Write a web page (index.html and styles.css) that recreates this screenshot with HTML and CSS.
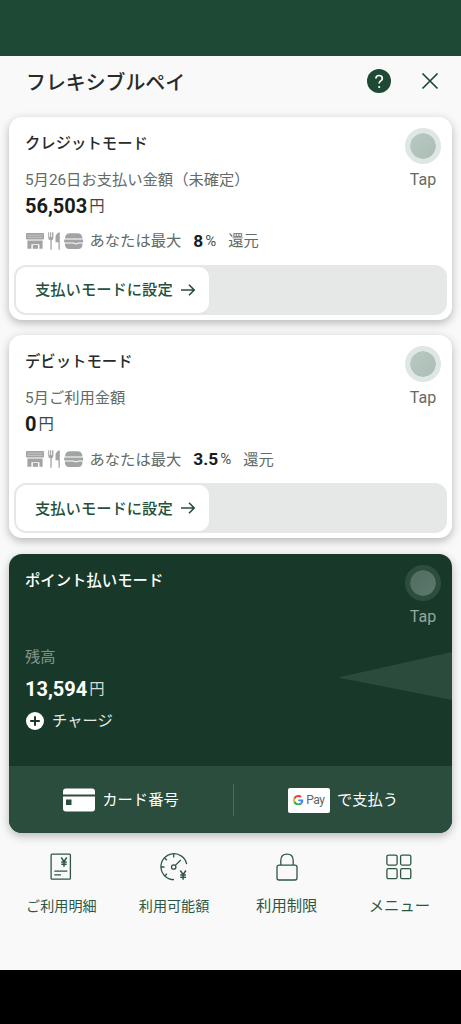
FILE: index.html
```html
<!DOCTYPE html>
<html lang="ja">
<head>
<meta charset="utf-8">
<title>フレキシブルペイ</title>
<link rel="stylesheet" href="styles.css">
</head>
<body>
<svg width="0" height="0" class="defs">
  <symbol id="perks" viewBox="0 0 58 18">
    <g fill="#a2a4a3">
      <rect x="0" y="1" width="18" height="6.600" rx=".8"/>
      <path d="M1.400 8.600h15.200v8.200h-3.200v-4.600H5.400v4.600H1.400z"/>
      <rect x="6.800" y="13" width="5.200" height="3.800"/>
      <path d="M22.200.3h1v5h.9v-5h1.100v5h.9v-5h1.300v5.700q0 1.900-1.700 2.300V17.700h-1.300V8.300q-2.200-.4-2.200-2.600z"/>
      <path d="M33.800.2v17.500h-1.300V10.300h-3V4.500q.8-3.500 4.300-4.300z"/>
      <path d="M38.900 6.600q.4-5.400 5.300-5.400h7q4.900 0 5.300 5.400z"/>
      <path d="M38.200 7.500h18.900v2.900h-4.600l-2.600 1.200-2.600-1.200h-9.100z"/>
      <path d="M38.900 11.400h8l3 1.200 3-1.200h3.600v1.200q-.4 4.500-4.300 4.500h-9q-3.900 0-4.300-4.500z"/>
    </g>
    <path d="M1.200 3.200h15.600M1.200 5.400h15.600" stroke="#d0d2d1" stroke-width=".7"/>
  </symbol>
  <symbol id="arrow" viewBox="0 0 16 14">
    <path d="M1 7h13M9 1.700 14.200 7 9 12.300" fill="none" stroke="#24503c" stroke-width="1.600"/>
  </symbol>
</svg>

<div class="status"></div>
<main class="screen">
  <header class="top">
    <h1>フレキシブルペイ</h1>
    <svg class="help" viewBox="0 0 24 24"><circle cx="12" cy="12" r="12" fill="#1e4935"/><path d="M8.900 9.600q0-3.100 3.200-3.100t3.200 2.900q0 1.400-1.600 2.500-1.500 1-1.500 2.600" fill="none" stroke="#fff" stroke-width="1.700"/><circle cx="12.200" cy="18" r="1.100" fill="#fff"/></svg>
    <svg class="close" viewBox="0 0 18 18"><path d="M1.500 1.500l15 15M16.500 1.500l-15 15" stroke="#1e4935" stroke-width="1.700"/></svg>
  </header>

  <section class="card">
    <div class="head">
      <div class="info">
        <h2>クレジットモード</h2>
        <p class="sub">5月26日お支払い金額（未確定）</p>
        <p class="amount"><b>56,503</b><span>円</span></p>
      </div>
      <div class="tap"><i class="knob"></i><span>Tap</span></div>
    </div>
    <p class="perk"><svg class="perks"><use href="#perks"/></svg><span>あなたは最大</span><b>8</b><small>%</small><span>還元</span></p>
    <div class="track"><div class="set">支払いモードに設定<svg class="arrow"><use href="#arrow"/></svg></div></div>
  </section>

  <section class="card">
    <div class="head">
      <div class="info">
        <h2>デビットモード</h2>
        <p class="sub">5月ご利用金額</p>
        <p class="amount"><b>0</b><span>円</span></p>
      </div>
      <div class="tap"><i class="knob"></i><span>Tap</span></div>
    </div>
    <p class="perk"><svg class="perks"><use href="#perks"/></svg><span>あなたは最大</span><b>3.5</b><small>%</small><span>還元</span></p>
    <div class="track"><div class="set">支払いモードに設定<svg class="arrow"><use href="#arrow"/></svg></div></div>
  </section>

  <section class="card dark">
    <svg class="beam" viewBox="0 0 114 48"><path d="M0 25.500 114 0v48z" fill="#2b4c3d"/></svg>
    <div class="head">
      <div class="info">
        <h2>ポイント払いモード</h2>
        <p class="sub balance">残高</p>
        <p class="amount"><b>13,594</b><span>円</span></p>
        <p class="charge"><svg class="plus" viewBox="0 0 18 18"><circle cx="9" cy="9" r="9" fill="#fff"/><path d="M9 4.200v9.600M4.200 9h9.600" stroke="#183929" stroke-width="2"/></svg>チャージ</p>
      </div>
      <div class="tap"><i class="knob"></i><span>Tap</span></div>
    </div>
    <div class="actions">
      <div class="action">
        <svg class="cardicon" viewBox="0 0 32 24"><path d="M0 6.500V3.500Q0 .5 3 .5h26q3 0 3 3v3z" fill="#fff"/><path d="M0 8.500h32v12q0 3-3 3H3q-3 0-3-3z" fill="#fff"/><rect x="3" y="11.500" width="5.500" height="5.500" fill="#2a4d3e"/></svg>
        <span>カード番号</span>
      </div>
      <div class="action pay">
        <span class="gpay"><svg class="g" viewBox="0 0 48 48"><path fill="#EA4335" d="M24 9.500c3.540 0 6.710 1.220 9.210 3.600l6.850-6.850C35.900 2.380 30.470 0 24 0 14.620 0 6.510 5.380 2.560 13.220l7.980 6.190C12.430 13.720 17.740 9.500 24 9.500z"/><path fill="#4285F4" d="M46.980 24.550c0-1.570-.15-3.090-.38-4.550H24v9.020h12.940c-.58 2.960-2.260 5.480-4.780 7.180l7.730 6c4.510-4.180 7.090-10.360 7.090-17.650z"/><path fill="#FBBC05" d="M10.530 28.590a14.500 14.500 0 0 1 0-9.180l-7.980-6.190a24 24 0 0 0 0 21.560z"/><path fill="#34A853" d="M24 48c6.480 0 11.930-2.130 15.890-5.810l-7.730-6c-2.150 1.450-4.920 2.300-8.160 2.300-6.260 0-11.570-4.220-13.470-9.910l-7.980 6.190C6.510 42.620 14.620 48 24 48z"/></svg>Pay</span>
        <span>で支払う</span>
      </div>
    </div>
  </section>

  <nav class="nav">
    <a class="tight"><svg viewBox="0 0 30 30"><rect x="5.100" y="2.200" width="19.300" height="25" rx="1"/><path d="M15.300 5.500 18 9.700l2.700-4.200M18 9.700v5M15.300 10h5.400M15.300 12.300h5.400" stroke-width="1.500"/><path d="M8.300 19.200h13M8.300 22.900h6.700"/></svg>ご利用明細</a>
    <a class="tight"><svg viewBox="0 0 30 30"><path d="M15 27.700a13 13 0 1 1 12.700-15.500"/><circle cx="14.700" cy="15" r="2.200"/><path d="M16.300 13.400 21.800 8M14.700 2v3.400M5.600 6l2.300 2.300M2 15h3.500M5.700 24l2.200-2.200"/><path d="M21.300 18.500 24.100 22.700l2.800-4.200M24.100 22.700v5M21.300 23h5.600M21.300 25.300h5.600" stroke-width="1.500"/></svg>利用可能額</a>
    <a><svg viewBox="0 0 30 30"><rect x="5" y="13.200" width="20" height="14.800" rx="2"/><path d="M8.800 13V8.500q0-6.300 6.200-6.300t6.200 6.300V13"/></svg>利用制限</a>
    <a><svg viewBox="0 0 30 30"><rect x="2.900" y="3.100" width="10.200" height="10" rx="1.500"/><rect x="16.600" y="3.100" width="10.200" height="10" rx="1.500"/><rect x="2.900" y="16.700" width="10.200" height="10" rx="1.500"/><rect x="16.600" y="16.700" width="10.200" height="10" rx="1.500"/></svg>メニュー</a>
  </nav>
</main>
<div class="system"></div>
</body>
</html>
```
FILE: styles.css
```css
* { box-sizing: border-box; }
body {
  margin: 0;
  width: 461px;
  height: 1024px;
  display: flex;
  flex-direction: column;
  overflow: hidden;
  font-family: Roboto, "Noto Sans CJK JP", sans-serif;
  font-size: 15.300px;
  line-height: 24px;
  color: #616b67;
  background: #f9f9f9;
}
h1, h2, p { margin: 0; white-space: nowrap; }
svg { display: block; flex: none; }
.defs { position: absolute; }
.status { height: 56px; background: #1e4935; flex: none; }
.system { height: 54px; background: #000; flex: none; }
.screen { flex: 1; display: flex; flex-direction: column; padding: 0 9px; gap: 15.500px; }
.top { height: 45.200px; display: flex; align-items: center; padding: 5px 13px 0 17px; flex: none; }
.top h1 { flex: 1; padding-top: 5px; font-size: 19.900px; font-weight: 500; color: #262b29; }
.help { width: 24px; height: 24px; margin-right: 30.500px; }
.close { width: 18px; height: 18px; }

.card {
  position: relative;
  height: 203px;
  flex: none;
  display: flex;
  flex-direction: column;
  padding: 14px 5px 5px;
  background: #fff;
  border-radius: 13px;
  box-shadow: 0 3px 10px rgba(0, 0, 0, .27);
}
.head { display: flex; justify-content: space-between; padding: 0 6px 0 11px; height: 96px; }
.card h2 { padding-top: 1px; font-size: 15.360px; line-height: 24px; font-weight: 500; color: #262b29; margin-bottom: 12px; }
.sub { height: 26px; }
.amount { display: flex; align-items: center; gap: 2px; height: 24px; color: #3e4542; }
.amount b { font-size: 20px; color: #181d1b; }
.tap { width: 36px; margin-top: -3px; display: flex; flex-direction: column; align-items: center; }
.tap span { margin-top: 4px; font-size: 16px; line-height: 24px; }
.knob {
  width: 36px;
  height: 36px;
  border-radius: 50%;
  border: 5.500px solid #dfe7e4;
  background: linear-gradient(135deg, #bccbc5, #a8bbb3) border-box;
  background-clip: padding-box;
}
.perk { display: flex; align-items: center; height: 24px; padding-left: 11.500px; margin-top: 2px; }
.perks { width: 58px; height: 18px; margin-right: 6px; }
.perk > span { padding-top: 1px; }
.perk b { font-size: 17.300px; color: #181d1b; margin-left: 12px; }
.perk small { font-size: 15px; margin: 0 12px 0 2px; color: #4c5551; }
.track {
  margin-top: auto;
  height: 50px;
  padding: 2px;
  border-radius: 12px;
  background: #e5e8e6;
}
.set {
  width: 193px;
  height: 46px;
  padding: 1px 0 0 19px;
  display: flex;
  align-items: center;
  gap: 7px;
  border-radius: 10px;
  background: #fff;
  color: #24503c;
  font-weight: 500;
}
.arrow { width: 16px; height: 14px; margin-bottom: 1px; }

.dark { height: 279.500px; padding: 14px 0 0; background: #183929; overflow: hidden; color: #e6ebe8; }
.dark .head { padding: 0 11px 0 16px; flex: 1; }
.dark h2 { color: #fff; margin-bottom: 52px; }
.balance { height: 32px; color: #82948b; }
.dark .amount { color: #d4dbd8; }
.dark .amount b { color: #fff; }
.charge { display: flex; align-items: center; gap: 8px; height: 24px; margin-top: 8px; }
.plus { width: 18px; height: 18px; margin-left: 1px; }
.dark .tap { color: #97a69e; }
.dark .knob { border-color: #2d4e3f; background-image: linear-gradient(135deg, #4d6b5e, #607a6f); }
.beam { position: absolute; right: 0; top: 98px; width: 114px; height: 48px; }
.actions { height: 67px; padding-top: 1px; display: flex; align-items: center; background: #2a4d3e; }
.action { flex: 1; height: 32px; display: flex; align-items: center; justify-content: center; gap: 7px; color: #fff; }
.action:first-child { flex: 0 0 225px; border-right: 1px solid #4e6b5f; }
.gpay {
  width: 42px;
  height: 25px;
  display: flex;
  align-items: center;
  justify-content: center;
  gap: 2.500px;
  border-radius: 2px;
  background: #fff;
  color: #5f6368;
  font-size: 12px;
  letter-spacing: -.5px;
}
.g { width: 10.500px; height: 10.500px; }
.cardicon { width: 32px; height: 24px; }

.nav { display: grid; grid-template-columns: repeat(4, 112.700px); margin: 0 -4px; }
.nav a { display: flex; flex-direction: column; align-items: center; gap: 12px; color: #2d5743; white-space: nowrap; }
.nav .tight { font-size: 14.100px; }
.nav svg { width: 30px; height: 30px; margin-top: 3.500px; fill: none; stroke: #2d5743; stroke-width: 1.300; }
```
